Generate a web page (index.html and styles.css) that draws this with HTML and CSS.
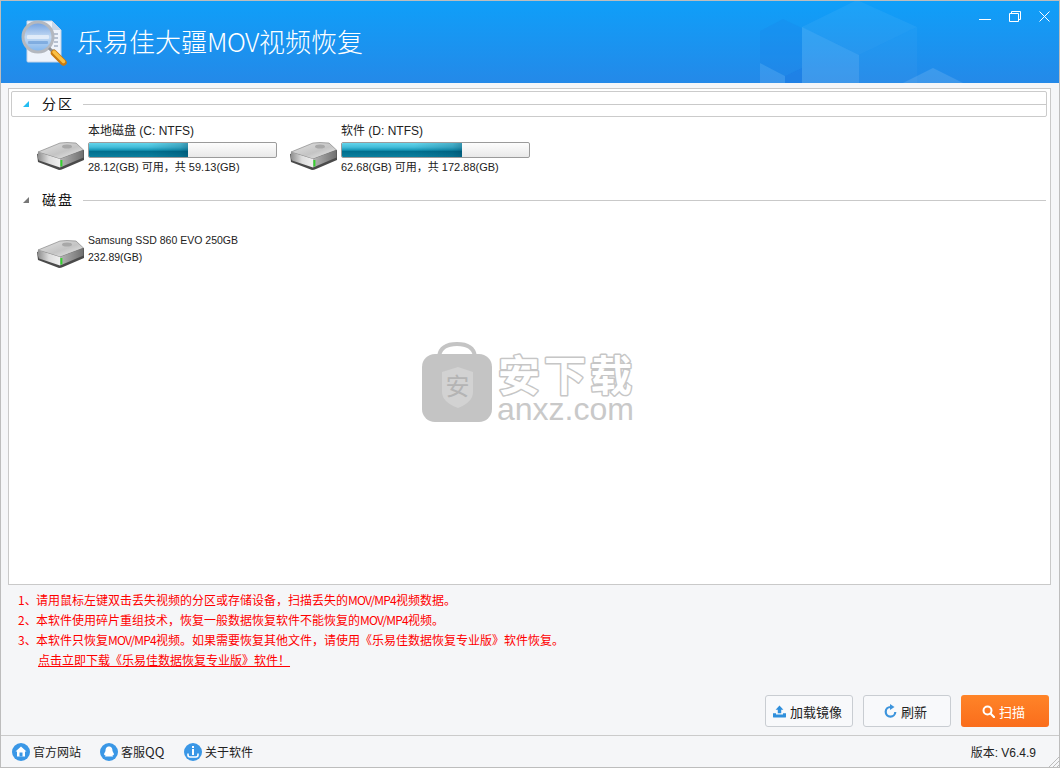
FILE: index.html
```html
<!DOCTYPE html>
<html lang="zh-CN">
<head>
<meta charset="utf-8">
<title>乐易佳大疆MOV视频恢复</title>
<link rel="stylesheet" href="styles.css">
</head>
<body>
<svg class="defs" width="0" height="0" aria-hidden="true">
  <defs>
    <linearGradient id="dt" x1="0" y1="0" x2="1" y2="1"><stop offset="0" stop-color="#e4e4e4"/><stop offset=".55" stop-color="#c4c4c4"/><stop offset="1" stop-color="#f0f0f0"/></linearGradient>
    <linearGradient id="dl" x1="0" y1="0" x2="1" y2="0"><stop offset="0" stop-color="#8c8c8c"/><stop offset=".5" stop-color="#dcdcdc"/><stop offset="1" stop-color="#efefef"/></linearGradient>
    <linearGradient id="dr" x1="0" y1="0" x2="1" y2="0"><stop offset="0" stop-color="#b5b5b5"/><stop offset="1" stop-color="#6f6f6f"/></linearGradient>
    <linearGradient id="lens" x1="0" y1="0" x2="0" y2="1"><stop offset="0" stop-color="#6f9fe0"/><stop offset=".5" stop-color="#c4daf3"/><stop offset="1" stop-color="#7fb4ec"/></linearGradient>
    <symbol id="drive" viewBox="0 0 48 28">
      <path d="M1 12 L2 20 L23 28 Q25 28 27 27 L48 18 L48 8Z" fill="#4a4a4a"/>
      <path d="M2 10 L24 1 Q30 0 40 1 L47.500 8 L24 17Z" fill="url(#dt)" stroke="#777" stroke-width=".6"/>
      <ellipse cx="31" cy="4.500" rx="5" ry="2" fill="#a8a8a8"/>
      <path d="M2 10 L24 17 L24 25.500 L3 18.500 Q1 15 2 10Z" fill="url(#dl)"/>
      <path d="M24 17 L47.500 8 L47.500 15.500 L24 25.500Z" fill="url(#dr)"/>
      <rect x="24.400" y="18" width="2" height="6.500" fill="#36d22f"/>
    </symbol>
  </defs>
</svg>
<div class="window">
  <header class="titlebar">
    <svg class="cubes" width="300" height="82" viewBox="0 0 300 82" aria-hidden="true">
      <path d="M0 62 L25 75 L25 82 L0 82Z" fill="#fff" opacity=".1"/>
      <path d="M25 75 L42 67 L42 82 L25 82Z" fill="#1a6fe0" opacity=".35"/>
      <path d="M0 30 L23 18 L42 27 L42 67 L25 75 L0 62Z" fill="#1a78e4" opacity=".18"/>
      <path d="M42 26 L97 -1 L157 26 L99 54Z" fill="#fff" opacity=".05"/>
      <path d="M42 26 L99 54 L99 82 L42 82Z" fill="#fff" opacity=".12"/>
      <path d="M99 54 L157 26 L157 82 L99 82Z" fill="#fff" opacity=".03"/>
      <path d="M143 82 L173 67 L203 82Z" fill="#fff" opacity=".12"/>
    </svg>
    <div class="brand">
      <svg class="logo" width="48" height="48" viewBox="0 0 48 48" aria-hidden="true">
        <path d="M7 3 H32 L41 12 V43 Q41 44 40 44 H8 Q7 44 7 43Z" fill="#eef3fb" stroke="#c5d3e6"/>
        <path d="M32 3 V12 H41Z" fill="#c8d6e8"/>
        <path d="M31 16h7M33 20h5M34 24h4M34 28h4M32 32h3" stroke="#7f90aa" stroke-width="1.200"/>
        <circle cx="18" cy="19" r="15" fill="url(#lens)" stroke="#b4b8bf" stroke-width="3"/>
        <rect x="7" y="17" width="22" height="4" rx="1" fill="#e6eff9" opacity=".85"/>
        <rect x="8" y="23" width="20" height="3" rx="1" fill="#6f9fd8" opacity=".7"/>
        <path d="M29 30 L33 34" stroke="#8a8f96" stroke-width="3"/>
        <path d="M34 35 L43.500 44.500" stroke="#c97a10" stroke-width="6.500" stroke-linecap="round"/>
        <path d="M34 34 L43.500 43.500" stroke="#fbc044" stroke-width="3.500" stroke-linecap="round"/>
      </svg>
      <h1 class="apptitle">乐易佳大疆<span class="apptitle-latin">MOV</span>视频恢复</h1>
    </div>
    <div class="controls">
      <svg class="ctl-min" width="12" height="12" viewBox="0 0 12 12" aria-hidden="true"><path d="M0 8.500H12" stroke="#fff"/></svg>
      <svg class="ctl-max" width="12" height="11" viewBox="0 0 12 11" aria-hidden="true"><path d="M.5 2.500h9v8h-9zM2.500 2.500V.5h9v8H9.500" fill="none" stroke="#fff"/></svg>
      <svg class="ctl-close" width="11" height="11" viewBox="0 0 11 11" aria-hidden="true"><path d="M.5.5l10 10M10.500.5l-10 10" stroke="#fff"/></svg>
    </div>
  </header>

  <main class="panel">
    <section class="group group-focus">
      <span class="tri tri-blue"></span>
      <h2 class="group-name">分区</h2>
      <span class="rule"></span>
    </section>
    <div class="drives">
      <div class="drive">
        <svg class="drive-icon" width="48" height="28" aria-hidden="true"><use href="#drive"/></svg>
        <div class="drive-info">
          <div class="drive-name">本地磁盘 (C: NTFS)</div>
          <div class="bar"><div class="bar-fill" style="width:53%"></div></div>
          <div class="drive-size">28.12(GB) 可用，共 59.13(GB)</div>
        </div>
      </div>
      <div class="drive">
        <svg class="drive-icon" width="48" height="28" aria-hidden="true"><use href="#drive"/></svg>
        <div class="drive-info">
          <div class="drive-name">软件 (D: NTFS)</div>
          <div class="bar"><div class="bar-fill" style="width:64%"></div></div>
          <div class="drive-size">62.68(GB) 可用，共 172.88(GB)</div>
        </div>
      </div>
    </div>
    <section class="group group-plain">
      <span class="tri tri-grey"></span>
      <h2 class="group-name">磁盘</h2>
      <span class="rule"></span>
    </section>
    <div class="disk">
      <svg class="drive-icon" width="48" height="28" aria-hidden="true"><use href="#drive"/></svg>
      <div class="disk-info">
        <div class="disk-name">Samsung SSD 860 EVO 250GB</div>
        <div class="disk-size">232.89(GB)</div>
      </div>
    </div>
    <div class="watermark">
      <svg class="wm-bag" width="70" height="80" viewBox="0 0 70 80" aria-hidden="true">
        <path d="M17 14 Q19 2 35 2 Q51 2 53 14" fill="none" stroke="#c4c4c4" stroke-width="4"/>
        <rect x="0" y="12" width="70" height="68" rx="13" fill="#c4c4c4"/>
        <path d="M20 30 L36 25 L51 30 V50 Q51 60 36 66 Q20 60 20 50Z" fill="#d2d2d2"/>
        <text x="35.500" y="53" class="wm-glyph">安</text>
      </svg>
      <div class="wm-text">
        <svg class="wm-cn" width="140" height="40" viewBox="0 0 140 40"><text x="1" y="35" class="wm-cn-text">安下载</text></svg>
        <div class="wm-en">anxz.com</div>
      </div>
    </div>
  </main>

  <section class="notes">
    <p class="note"><span class="num">1、</span>请用鼠标左键双击丢失视频的分区或存储设备，扫描丢失的<span class="latin">MOV/MP4</span>视频数据。</p>
    <p class="note"><span class="num">2、</span>本软件使用碎片重组技术，恢复一般数据恢复软件不能恢复的<span class="latin">MOV/MP4</span>视频。</p>
    <p class="note"><span class="num">3、</span>本软件只恢复<span class="latin">MOV/MP4</span>视频。如果需要恢复其他文件，请使用《乐易佳数据恢复专业版》软件恢复。</p>
    <p class="note note-link"><a class="link">点击立即下载《乐易佳数据恢复专业版》软件！</a></p>
  </section>

  <div class="actions">
    <button class="btn">
      <svg width="13" height="13" viewBox="0 0 15 14" aria-hidden="true"><path d="M7.500 0 L12 5 H9.500 V9 H5.500 V5 H3Z" fill="#2f8fdc"/><path d="M0 9 H3.500 V10.500 H11.500 V9 H15 V13 Q15 14 14 14 H1 Q0 14 0 13Z" fill="#2f8fdc"/></svg>
      加载镜像
    </button>
    <button class="btn">
      <svg width="13" height="14" viewBox="0 0 13 14" aria-hidden="true"><path d="M6.500 3 A4.800 4.800 0 1 0 11.300 8" fill="none" stroke="#3c94dc" stroke-width="2.200"/><path d="M6 0 L10.500 3 L6 6Z" fill="#3c94dc"/></svg>
      刷新
    </button>
    <button class="btn btn-primary">
      <svg width="13" height="13" viewBox="0 0 13 13" aria-hidden="true"><circle cx="5.500" cy="5.500" r="4" fill="none" stroke="#fff" stroke-width="2"/><path d="M8.500 8.500L12 12" stroke="#fff" stroke-width="2.200" stroke-linecap="round"/></svg>
      扫描
    </button>
  </div>

  <footer class="statusbar">
    <a class="stat">
      <svg width="18" height="18" viewBox="0 0 18 18" aria-hidden="true"><circle cx="9" cy="9" r="9" fill="#3a97e6"/><path d="M9 3.500 L14.500 8.500 H13 V13.500 H5 V8.500 H3.500Z" fill="#fff"/><rect x="7.500" y="9.500" width="3" height="4" fill="#3a97e6"/></svg>
      官方网站
    </a>
    <a class="stat">
      <svg width="18" height="18" viewBox="0 0 18 18" aria-hidden="true"><circle cx="9" cy="9" r="9" fill="#3a97e6"/><path d="M9 3.500 C12 3.500 12.500 6 12.500 8 L14 11 Q14 12.500 12.500 12 L13 13.500 H5 L5.500 12 Q4 12.500 4 11 L5.500 8 C5.500 6 6 3.500 9 3.500Z" fill="#fff"/></svg>
      客服<span class="qq">QQ</span>
    </a>
    <a class="stat">
      <svg width="18" height="18" viewBox="0 0 18 18" aria-hidden="true"><circle cx="9" cy="9" r="9" fill="#3a97e6"/><rect x="8" y="3" width="2" height="2" fill="#fff"/><rect x="8" y="6" width="2" height="6" fill="#fff"/><path d="M4 10.500 V12 Q4 14 6 14 H12 Q14 14 14 12 V10.500" fill="none" stroke="#fff" stroke-width="1.600"/></svg>
      关于软件
    </a>
    <span class="version">版本: V6.4.9</span>
    <svg class="grip" width="11" height="11" viewBox="0 0 11 11" aria-hidden="true"><path d="M11 1L1 11M11 5L5 11M11 9L9 11" stroke="#bcbcbc"/></svg>
  </footer>
</div>
</body>
</html>
```

FILE: styles.css
```css
* { box-sizing: border-box; }
html, body { margin: 0; padding: 0; }
body {
  width: 1060px;
  height: 768px;
  overflow: hidden;
  font-family: "Liberation Sans", "Noto Sans CJK SC", sans-serif;
  font-size: 12px;
  color: #111;
}
.defs { position: absolute; }
.window {
  display: flex;
  flex-direction: column;
  width: 1060px;
  height: 768px;
  border: 1px solid #bdbdbd;
  background: #f5f6f8;
}
.titlebar {
  position: relative;
  flex: none;
  height: 82px;
  margin: 0;
  padding: 0 9px 0 19px;
  display: flex;
  align-items: center;
  justify-content: space-between;
  overflow: hidden;
  background: linear-gradient(#0f9ff9, #2489e8);
}
.cubes { position: absolute; left: 759px; top: 0; }
.brand { position: relative; display: flex; align-items: center; gap: 9px; }
.apptitle {
  margin: -2px 0 0;
  font-family: "Noto Sans CJK SC", sans-serif;
  font-size: 26px;
  font-weight: 300;
  line-height: 36px;
  color: #fff;
  white-space: nowrap;
}
.apptitle-latin { letter-spacing: -.5px; }
.controls {
  position: relative;
  align-self: flex-start;
  display: flex;
  align-items: flex-start;
  margin-top: 10px;
  gap: 18px;
}
.panel {
  position: relative;
  flex: none;
  height: 497px;
  margin: 5px 8px 0 7px;
  padding: 2px 3px 0 2px;
  background: #fff;
  border: 1px solid #c9c9c9;
}
.group {
  display: flex;
  align-items: center;
  height: 26px;
  padding-left: 11px;
}
.group-focus { border: 1px solid #cbcbcb; border-radius: 2px; }
.group-plain { margin-right: 1px; padding-left: 12px; }
.tri { width: 0; height: 0; border-style: solid; border-width: 0 0 6px 6px; border-color: transparent transparent #888 transparent; flex: none; }
.tri-blue { border-bottom-color: #24bdf2; }
.tri-grey { border-bottom-color: #777; }
.group-name {
  margin: -2px 0 0 13px;
  width: 41px;
  font-family: "Noto Sans CJK SC", sans-serif;
  font-size: 14px;
  font-weight: 400;
  letter-spacing: 2px;
  line-height: 20px;
  color: #111;
}
.rule { flex: 1; height: 1px; background: #c9c9c9; }
.drives {
  display: flex;
  padding: 6px 0 0 25px;
  height: 70px;
}
.drive { display: flex; width: 253px; }
.drive-icon { flex: none; margin-top: 19px; }
.drive-info { margin-left: 4px; width: 189px; }
.drive-name { height: 19px; line-height: 17px; font-size: 12px; color: #222; white-space: nowrap; }
.bar {
  height: 16px;
  border: 1px solid #9b9b9b;
  border-radius: 2px;
  overflow: hidden;
  background: linear-gradient(#fdfdfd, #e9e9e9);
}
.bar-fill {
  height: 100%;
  background:
    linear-gradient(90deg, rgba(0,60,90,0) 60%, rgba(0,60,90,.22) 92%, rgba(0,60,90,.4)),
    linear-gradient(#63d5ec 0, #43bcd8 30%, #1898b8 50%, #006f8e 60%, #0a7f9e 100%);
}
.drive-size { height: 18px; line-height: 18px; font-size: 11px; color: #222; white-space: nowrap; }
.disk { display: flex; padding: 0 0 0 25px; height: 60px; margin-top: 1px; }
.disk .drive-icon { margin-top: 26px; }
.disk-info { margin-left: 4px; padding-top: 17px; }
.disk-name { height: 18px; line-height: 18px; font-size: 10.500px; color: #222; white-space: nowrap; }
.disk-size { height: 17px; line-height: 17px; font-size: 10.500px; color: #222; }
.watermark {
  position: absolute;
  left: 413px;
  top: 253px;
  display: flex;
  gap: 5px;
}
.wm-glyph {
  font-family: "Noto Sans CJK SC", sans-serif;
  font-size: 24px;
  fill: #b4b4b4;
  text-anchor: middle;
}
.wm-text { padding-top: 14px; }
.wm-cn { display: block; overflow: visible; }
.wm-cn-text {
  font-family: "Noto Sans CJK SC", sans-serif;
  font-size: 42px;
  font-weight: 700;
  letter-spacing: 4px;
  fill: #fff;
  stroke: #c6c6c6;
  stroke-width: 3px;
  stroke-linejoin: round;
  paint-order: stroke fill;
}
.wm-en {
  height: 26px;
  font-family: "Liberation Sans", sans-serif;
  font-size: 32px;
  line-height: 26px;
  color: #c9c9c9;
  white-space: nowrap;
}
.notes {
  flex: none;
  height: 100px;
  padding: 5px 0 0 17px;
  font-family: "Noto Sans CJK SC", sans-serif;
  font-size: 12px;
  color: #f00;
}
.note { margin: 0; height: 20px; line-height: 20px; white-space: nowrap; }
.num { display: inline-block; width: 18px; }
.latin { letter-spacing: -.8px; }
.note-link { padding-left: 20px; }
.link { color: #f00; text-decoration: underline; }
.actions {
  flex: none;
  display: flex;
  justify-content: flex-end;
  gap: 10px;
  padding: 10px 10px 0 0;
  height: 50px;
}
.btn {
  display: flex;
  align-items: center;
  justify-content: center;
  gap: 4px;
  width: 88px;
  height: 32px;
  padding: 0 3px 0 0;
  border: 1px solid #c9cdd2;
  border-radius: 3px;
  background: #f8f9fb;
  font-family: "Noto Sans CJK SC", sans-serif;
  font-size: 13px;
  color: #222;
}
.btn-primary {
  border: 0;
  background: linear-gradient(#ff8428, #fa6d1c);
  color: #fff;
}
.statusbar {
  position: relative;
  flex: 1;
  display: flex;
  align-items: center;
  padding: 0 23px 0 11px;
  border-top: 1px solid #cbcbcb;
  font-family: "Noto Sans CJK SC", sans-serif;
  font-size: 12px;
  color: #222;
}
.stat { display: flex; align-items: center; gap: 3px; }
.stat:nth-child(1) { width: 88px; }
.stat:nth-child(2) { width: 84px; }
.qq { margin-left: -3px; font-size: 13px; }
.version { margin-left: auto; font-family: "Liberation Sans", "Noto Sans CJK SC", sans-serif; font-size: 12px; }
.grip { position: absolute; right: 0; bottom: 0; }
```
